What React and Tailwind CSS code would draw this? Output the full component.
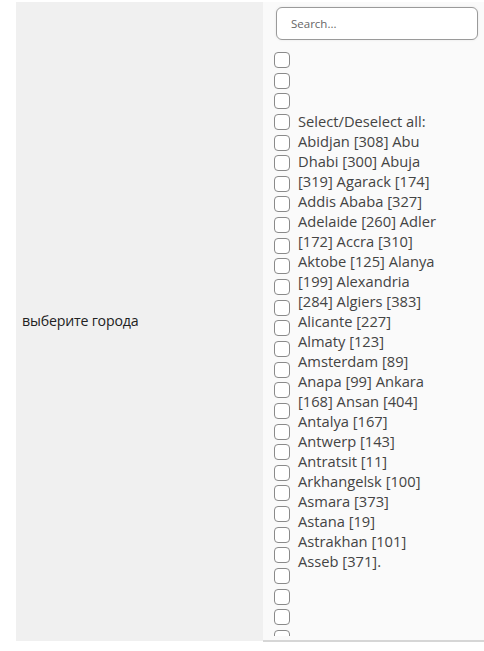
import React from 'react';

const lines = [
  'Select/Deselect all:',
  'Abidjan [308] Abu',
  'Dhabi [300] Abuja',
  '[319] Agarack [174]',
  'Addis Ababa [327]',
  'Adelaide [260] Adler',
  '[172] Accra [310]',
  'Aktobe [125] Alanya',
  '[199] Alexandria',
  '[284] Algiers [383]',
  'Alicante [227]',
  'Almaty [123]',
  'Amsterdam [89]',
  'Anapa [99] Ankara',
  '[168] Ansan [404]',
  'Antalya [167]',
  'Antwerp [143]',
  'Antratsit [11]',
  'Arkhangelsk [100]',
  'Asmara [373]',
  'Astana [19]',
  'Astrakhan [101]',
  'Asseb [371].',
];

export default function App() {
  const boxes = Array.from({ length: 30 });
  return (
    <div className="w-[484px] h-[651px] bg-white pt-[2px] pl-[16px] flex items-start" style={{ fontFamily: '"Open Sans", "Noto Sans", sans-serif' }}>
      {/* left cell */}
      <div className="w-[247px] h-[639px] bg-[#f0f0f0] flex items-center pl-[6px]">
        <span className="text-[14.2px] text-[#222] tracking-[-0.2px] -mt-[2px]">выберите города</span>
      </div>

      {/* right cell */}
      <div className="w-[221px] h-[640px] bg-[#fafafa] border-b-2 border-[#d6d6d6] flex flex-col">
        <div className="pl-[13px] pr-[6px] pt-[5px]">
          <div className="h-[33px] rounded-[6px] border border-[#9a9a9a] bg-white flex items-center pl-[14px] shadow-[0_0_3px_rgba(0,0,0,0.08)]">
            <span className="text-[11.5px] text-[#666]">Search...</span>
          </div>
        </div>
        <div className="flex-1 overflow-hidden flex pl-[11px] pt-[12px] mb-[4px]">
          <div className="w-[17px] flex flex-col shrink-0">
            {boxes.map((_, i) => (
              <div key={i} className="w-[16px] h-[16px] mb-[4.65px] rounded-[4px] border border-[#8a8a8a] bg-white shrink-0" />
            ))}
          </div>
          <div className="pl-[7px] pt-[59px] text-[14.7px] leading-[20px] text-[#444] whitespace-nowrap">
            {lines.map((l, i) => (
              <div key={i}>{l}</div>
            ))}
          </div>
        </div>
      </div>
    </div>
  );
}
